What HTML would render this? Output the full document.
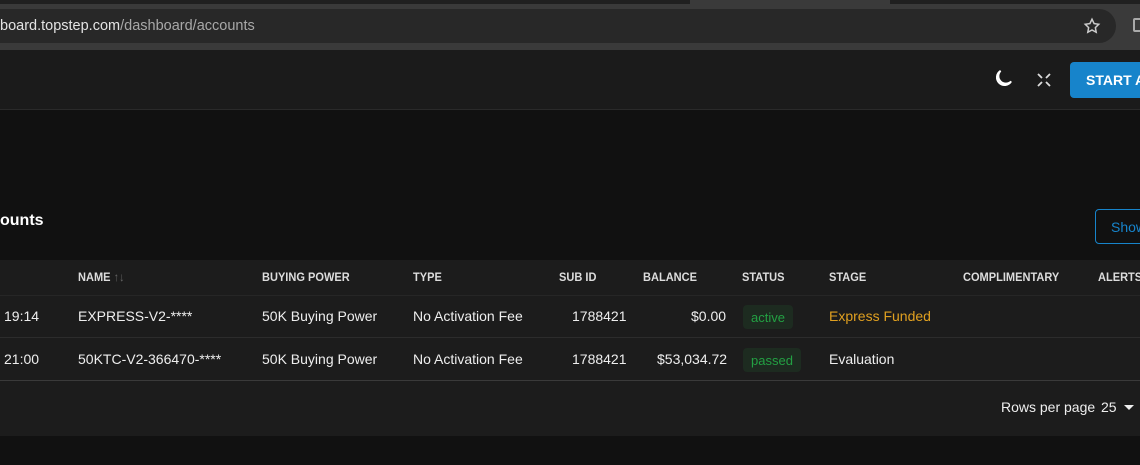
<!DOCTYPE html>
<html><head><meta charset="utf-8"><style>
*{margin:0;padding:0;box-sizing:border-box}
body{width:1140px;height:465px;overflow:hidden;background:#111;font-family:"Liberation Sans",sans-serif;position:relative;color:#e8e8e8}
.abs{position:absolute}
.tabs{left:0;top:0;width:1140px;height:4px;background:#202020}
.tool{left:0;top:4px;width:1140px;height:46px;background:#3a3a3a}
.pill{left:-30px;top:9px;width:1146px;height:34px;border-radius:17px;background:#282828}
.url{left:0;top:18px;font-size:14.5px;color:#e3e3e3}
.url span{color:#a8a8a8}
.hdr{left:0;top:50px;width:1140px;height:60px;background:#1b1b1b;border-bottom:1px solid #2a2a2a}
.btn{left:1070px;top:62px;width:80px;height:36px;background:#1784cb;border-radius:4px;color:#fff;font-weight:bold;font-size:14px;padding:10px 0 0 16px;white-space:nowrap;overflow:hidden}
.title{left:0;top:212px;font-size:16px;font-weight:bold;color:#fff}
.show{left:1095px;top:209px;width:60px;height:35px;border:1px solid #1784cb;border-radius:4px;color:#1784cb;font-size:14px;padding:9px 0 0 15px}
.card{left:0;top:260px;width:1140px;height:176px;background:#1c1c1c}
.th{top:270px;font-size:12px;font-weight:bold;color:#ddd;transform:scaleX(.92);transform-origin:left;white-space:nowrap}
.td{font-size:14px;color:#eee;white-space:nowrap}
.line{left:0;width:1140px;height:1px;background:#2c2c2c}
.chip{border-radius:4px;background:#1d2b20;color:#23a043;font-size:13px;padding:5px 8px;height:24px}
</style></head><body>
<div class="abs tabs"></div>
<div class="abs" style="left:690px;top:0;width:200px;height:4px;background:#3a3a3a"></div>
<div class="abs tool"></div>
<div class="abs pill"></div>
<div class="abs url">board.topstep.com<span>/dashboard/accounts</span></div>
<svg class="abs" style="left:1083px;top:17px" width="18" height="18" viewBox="0 0 24 24" fill="none" stroke="#ccc" stroke-width="2"><path d="M12 3l2.8 5.8 6.2.9-4.5 4.4 1.1 6.2L12 17.3 6.4 20.3l1.1-6.2L3 9.7l6.2-.9z"/></svg>
<div class="abs" style="left:1133px;top:18px;width:10px;height:14px;border:2px solid #aaa;border-radius:2px"></div>
<div class="abs hdr"></div>
<svg class="abs" style="left:991px;top:68px" width="23" height="23" viewBox="0 0 24 24" fill="none" stroke="#fff" stroke-width="2"><path d="M10 3a8 8 0 1 0 11 11 7 7 0 0 1-11-11z"/></svg>
<svg class="abs" style="left:1036px;top:72px" width="16" height="16" viewBox="0 0 16 16" fill="none" stroke="#ddd" stroke-width="1.8"><path d="M2 2l4 4M14 2l-4 4M2 14l4-4M14 14l-4-4"/></svg>
<div class="abs btn">START A TRIAL</div>
<div class="abs title">ounts</div>
<div class="abs show">Show</div>
<div class="abs card"></div>
<div class="abs th" style="left:78px">NAME <span style="color:#666;font-weight:normal">↑↓</span></div>
<div class="abs th" style="left:262px">BUYING POWER</div>
<div class="abs th" style="left:413px">TYPE</div>
<div class="abs th" style="left:559px">SUB ID</div>
<div class="abs th" style="left:643px">BALANCE</div>
<div class="abs th" style="left:742px">STATUS</div>
<div class="abs th" style="left:829px">STAGE</div>
<div class="abs th" style="left:963px">COMPLIMENTARY</div>
<div class="abs th" style="left:1098px">ALERTS</div>
<div class="abs line" style="top:295px;background:#262626"></div>
<div class="abs td" style="left:4px;top:308px">19:14</div>
<div class="abs td" style="left:78px;top:308px">EXPRESS-V2-****</div>
<div class="abs td" style="left:262px;top:308px">50K Buying Power</div>
<div class="abs td" style="left:413px;top:308px">No Activation Fee</div>
<div class="abs td" style="left:572px;top:308px">1788421</div>
<div class="abs td" style="left:691px;top:308px">$0.00</div>
<div class="abs chip" style="left:743px;top:305px">active</div>
<div class="abs td" style="left:829px;top:308px;color:#e0a020">Express Funded</div>
<div class="abs line" style="top:337px"></div>
<div class="abs td" style="left:4px;top:351px">21:00</div>
<div class="abs td" style="left:78px;top:351px">50KTC-V2-366470-****</div>
<div class="abs td" style="left:262px;top:351px">50K Buying Power</div>
<div class="abs td" style="left:413px;top:351px">No Activation Fee</div>
<div class="abs td" style="left:572px;top:351px">1788421</div>
<div class="abs td" style="left:657px;top:351px">$53,034.72</div>
<div class="abs chip" style="left:743px;top:348px">passed</div>
<div class="abs td" style="left:829px;top:351px">Evaluation</div>
<div class="abs line" style="top:380px;background:#3a3a3a"></div>
<div class="abs td" style="left:1001px;top:399px">Rows per page</div>
<div class="abs td" style="left:1101px;top:399px">25</div>
<div class="abs" style="left:1124px;top:405px;border-left:5px solid transparent;border-right:5px solid transparent;border-top:5px solid #eee"></div>
</body></html>
